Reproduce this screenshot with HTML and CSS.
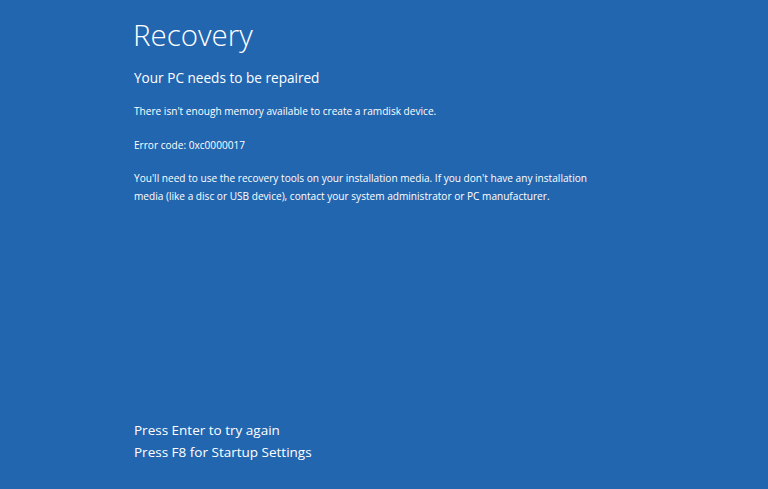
FILE: index.html
```html
<!DOCTYPE html>
<html>
<head>
    <meta charset="UTF-8">
    <title>Recovery</title>
    <link rel="stylesheet" href="styles.css">
</head>
<body>
<div class="screen">
    <div class="main">
        <h1 class="title">Recovery</h1>
        <h2 class="sub">Your PC needs to be repaired</h2>
        <p class="msg first">There isn't enough memory available to create a ramdisk device.</p>
        <p class="msg code">Error code: 0xc0000017</p>
        <p class="msg">You'll need to use the recovery tools on your installation media. If you don't have any installation media (like a disc or USB device), contact your system administrator or PC manufacturer.</p>
    </div>
    <ul class="keys">
        <li>Press Enter to try again</li>
        <li>Press F8 for Startup Settings</li>
    </ul>
</div>
</body>
</html>
```

FILE: styles.css
```css
* {
    margin: 0;
    padding: 0;
}

html, body {
    height: 100%;
}

body {
    background: #2366b0;
    color: #fff;
    font-family: "Open Sans", "Noto Sans", sans-serif;
    overflow: hidden;
}

ul, li {
    list-style: none;
}

.screen {
    height: 100%;
    padding: 0 0 26px 134px;
    box-sizing: border-box;
    display: flex;
    flex-direction: column;
    justify-content: space-between;
}

.main {
    padding-top: 15px;
}

.title {
    font-size: 29.5px;
    font-weight: 300;
    line-height: 40px;
    margin-left: -1px;
}

.sub {
    font-size: 13.6px;
    font-weight: 400;
    line-height: 22px;
    margin-top: 12px;
}

.msg {
    font-size: 10.1px;
    line-height: 18px;
    margin-top: 15px;
    width: 470px;
}

.msg.first {
    margin-top: 13px;
}

.msg.code {
    margin-top: 16px;
}

.keys li {
    font-size: 13.5px;
    line-height: 22px;
}
```
